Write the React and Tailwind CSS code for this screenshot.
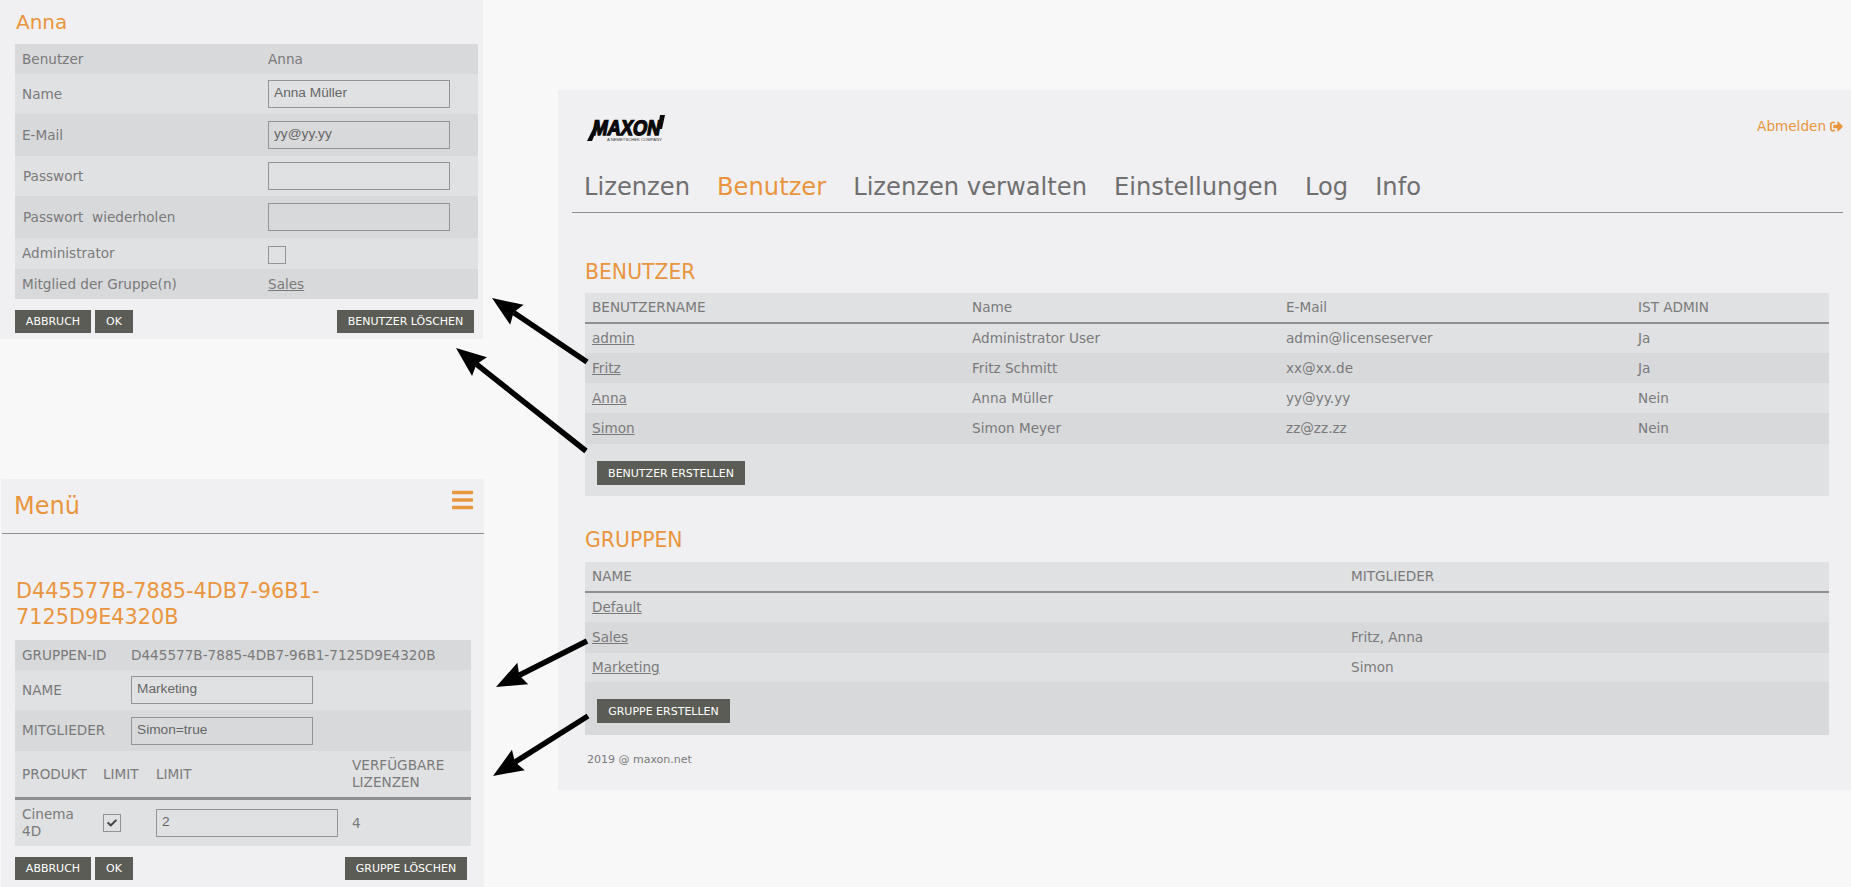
import React from "react";
import { FaBars, FaSignOutAlt, FaCheck } from "react-icons/fa";

const DARK = "bg-[#d8d9db]";
const LIGHT = "bg-[#e0e1e3]";
const inputCls =
  "h-[28px] w-[182px] border border-[#949494] bg-transparent px-[5px] pb-[3px] text-[13.7px] text-[#666] [font-family:'Liberation_Sans',Arial,sans-serif] outline-none";

function Btn({ children, className = "" }) {
  return (
    <span
      className={`inline-flex h-[23px] items-center justify-center bg-[#5a5c55] text-[11px] text-white ${className}`}
    >
      {children}
    </span>
  );
}

function Inp({ value = "", className = "" }) {
  return <input readOnly value={value} className={`${inputCls} ${className}`} />;
}

function FormRow({ label, h, bg, cols, labelCls = "pl-[7px]", children }) {
  return (
    <div className={`grid items-center ${cols} ${h} ${bg}`}>
      <div className={labelCls}>{label}</div>
      <div>{children}</div>
    </div>
  );
}

function UserPanel() {
  const cols = "grid-cols-[253px_1fr]";
  return (
    <section className="h-[339px] w-[483px] bg-[#f0f0f2] pl-[15px] pr-[5px]">
      <h2 className="h-[44px] pl-px pt-[8px] text-[20px] leading-[28px] text-[#e9953e]">Anna</h2>
      <FormRow label="Benutzer" h="h-[30px]" bg={DARK} cols={cols}>Anna</FormRow>
      <FormRow label="Name" h="h-[40px]" bg={LIGHT} cols={cols}><Inp value="Anna Müller" /></FormRow>
      <FormRow label="E-Mail" h="h-[42px]" bg={DARK} cols={cols}><Inp value="yy@yy.yy" /></FormRow>
      <FormRow label="Passwort" h="h-[40px]" bg={LIGHT} cols={cols} labelCls="pl-[8px]"><Inp /></FormRow>
      <FormRow label={"Passwort\u00a0 wiederholen"} h="h-[42px]" bg={DARK} cols={cols} labelCls="pl-[8px]"><Inp /></FormRow>
      <FormRow label="Administrator" h="h-[31px]" bg={LIGHT} cols={cols}>
        <span className="mt-[3px] block h-[18px] w-[18px] border border-[#949494]" />
      </FormRow>
      <FormRow label="Mitglied der Gruppe(n)" h="h-[30px]" bg={DARK} cols={cols}>
        <a className="underline">Sales</a>
      </FormRow>
      <div className="mt-[11px] flex gap-[4px] pr-[4px]">
        <Btn className="w-[76px]">ABBRUCH</Btn>
        <Btn className="w-[38px]">OK</Btn>
        <Btn className="ml-auto w-[137px]">BENUTZER LÖSCHEN</Btn>
      </div>
    </section>
  );
}

function GroupPanel() {
  const cols = "grid-cols-[116px_1fr]";
  const prod = "grid grid-cols-[81px_53px_196px_1fr] items-center pl-[7px]";
  return (
    <section className="ml-px h-[408px] w-[483px] bg-[#f0f0f2] pl-[14px] pr-[13px]">
      <div className="-mx-[13px] flex h-[55px] justify-between border-b border-[#8f8f8f] pl-[13px]">
        <h2 className="-ml-px pt-[12px] text-[24px] leading-[30px] text-[#e9953e]">Menü</h2>
        <FaBars className="mr-[11px] mt-[9px] h-[24px] w-[21px] text-[#e9953e]" />
      </div>
      <h2 className="h-[106px] pl-px pt-[45px] text-[20.8px] leading-[25.5px] text-[#e9953e]">
        D445577B-7885-4DB7-96B1-
        <br />
        7125D9E4320B
      </h2>
      <FormRow label="GRUPPEN-ID" h="h-[30px]" bg={DARK} cols={cols}>D445577B-7885-4DB7-96B1-7125D9E4320B</FormRow>
      <FormRow label="NAME" h="h-[40px]" bg={LIGHT} cols={cols}><Inp value="Marketing" /></FormRow>
      <FormRow label="MITGLIEDER" h="h-[41px]" bg={DARK} cols={cols}><Inp value="Simon=true" /></FormRow>
      <div className={`${prod} box-content h-[46px] border-b-[3px] border-[#8f8f8f] ${LIGHT}`}>
        <div>PRODUKT</div>
        <div>LIMIT</div>
        <div>LIMIT</div>
        <div className="leading-[17px]">VERFÜGBARE<br />LIZENZEN</div>
      </div>
      <div className={`${prod} h-[46px] ${LIGHT}`}>
        <div className="leading-[17px]">Cinema<br />4D</div>
        <div>
          <span className="flex h-[18px] w-[18px] items-center justify-center border border-[#949494]">
            <FaCheck className="h-[10px] w-[10px] text-[#444]" />
          </span>
        </div>
        <div><Inp value="2" /></div>
        <div>4</div>
      </div>
      <div className="mt-[11px] flex gap-[4px] pr-[4px]">
        <Btn className="w-[76px]">ABBRUCH</Btn>
        <Btn className="w-[38px]">OK</Btn>
        <Btn className="ml-auto w-[122px]">GRUPPE LÖSCHEN</Btn>
      </div>
    </section>
  );
}

function Logo() {
  return (
    <svg width="78" height="27" viewBox="0 0 78 27" className="block overflow-visible">
      <polygon points="0,26 5,26 11,12 7,12" fill="#0a0a0a" />
      <polygon points="73,0 78,0 75,14 71,14" fill="#0a0a0a" />
      <g transform="skewX(-10)">
        <text
          x="8"
          y="20"
          textLength="68"
          lengthAdjust="spacingAndGlyphs"
          fontFamily="'Liberation Sans', Arial, sans-serif"
          fontWeight="700"
          fontSize="21"
          fill="#0a0a0a"
          stroke="#0a0a0a"
          strokeWidth="1.4"
        >
          MAXON
        </text>
      </g>
      <text
        x="20"
        y="25.5"
        textLength="55"
        lengthAdjust="spacingAndGlyphs"
        fontFamily="'Liberation Sans', Arial, sans-serif"
        fontSize="4"
        fill="#333"
      >
        A NEMETSCHEK COMPANY
      </text>
    </svg>
  );
}

const NAV = ["Lizenzen", "Benutzer", "Lizenzen verwalten", "Einstellungen", "Log", "Info"];
const USERS = [
  ["admin", "Administrator User", "admin@licenseserver", "Ja", "h-[29px]", LIGHT],
  ["Fritz", "Fritz Schmitt", "xx@xx.de", "Ja", "h-[30px]", DARK],
  ["Anna", "Anna Müller", "yy@yy.yy", "Nein", "h-[30px]", LIGHT],
  ["Simon", "Simon Meyer", "zz@zz.zz", "Nein", "h-[31px]", DARK],
];
const GROUPS = [
  ["Default", "", "h-[29px]", LIGHT],
  ["Sales", "Fritz, Anna", "h-[31px]", DARK],
  ["Marketing", "Simon", "h-[29px]", LIGHT],
];

function MainPanel() {
  const uCols = "grid grid-cols-[380px_314px_352px_1fr] items-center pl-[7px]";
  const gCols = "grid grid-cols-[759px_1fr] items-center pl-[7px]";
  return (
    <main className="h-[700px] bg-[#f0f0f2] pl-[14px] pr-[8px]">
      <div className="flex h-[83px] justify-between pl-[15px] pt-[25px]">
        <Logo />
        <a className="flex h-[22px] items-center gap-[4px] text-[#e9953e]">
          Abmelden <FaSignOutAlt className="h-[13px] w-[13px]" />
        </a>
      </div>
      <nav className="box-content flex h-[39px] gap-[27px] border-b border-[#8f8f8f] pl-[12px] text-[24.2px] leading-[28px] text-[#6f6f6f]">
        {NAV.map((n) => (
          <span key={n} className={n === "Benutzer" ? "text-[#e9953e]" : ""}>{n}</span>
        ))}
      </nav>
      <div className="pl-[13px] pr-[14px]">
        <h2 className="h-[80px] pt-[46px] text-[20.4px] leading-[26px] text-[#e9953e]">BENUTZER</h2>
        <div className={`${uCols} box-content h-[29px] border-b-2 border-[#8f8f8f] ${LIGHT}`}>
          <div>BENUTZERNAME</div><div>Name</div><div>E-Mail</div><div>IST ADMIN</div>
        </div>
        {USERS.map(([u, n, m, a, h, bg]) => (
          <div key={u} className={`${uCols} ${h} ${bg}`}>
            <a className="underline">{u}</a><div>{n}</div><div>{m}</div><div>{a}</div>
          </div>
        ))}
        <div className={`h-[52px] pl-[12px] pt-[17px] ${LIGHT}`}>
          <Btn className="h-[24px] w-[148px]">BENUTZER ERSTELLEN</Btn>
        </div>
        <h2 className="h-[66px] pt-[31px] text-[20.4px] leading-[26px] text-[#e9953e]">GRUPPEN</h2>
        <div className={`${gCols} box-content h-[29px] border-b-2 border-[#8f8f8f] ${LIGHT}`}>
          <div>NAME</div><div>MITGLIEDER</div>
        </div>
        {GROUPS.map(([g, m, h, bg]) => (
          <div key={g} className={`${gCols} ${h} ${bg}`}>
            <a className="underline">{g}</a><div>{m}</div>
          </div>
        ))}
        <div className={`h-[53px] pl-[12px] pt-[17px] ${DARK}`}>
          <Btn className="h-[24px] w-[133px]">GRUPPE ERSTELLEN</Btn>
        </div>
        <p className="pl-[2px] pt-[17px] text-[11px] leading-[16px]">2019 @ maxon.net</p>
      </div>
    </main>
  );
}

function Arrows() {
  const lines = [
    [587, 362, 492, 298],
    [586, 451, 456, 348],
    [587, 641, 496, 687],
    [588, 716, 493, 776],
  ];
  return (
    <svg className="pointer-events-none absolute left-0 top-0" width="1851" height="887">
      {lines.map(([x1, y1, x2, y2], i) => {
        const len = Math.hypot(x2 - x1, y2 - y1);
        const ux = (x2 - x1) / len, uy = (y2 - y1) / len;
        const bx = x2 - ux * 30, by = y2 - uy * 30;
        const nx = x2 - ux * 26, ny = y2 - uy * 26;
        const px = -uy * 12, py = ux * 12;
        return (
          <g key={i}>
            <line x1={x1} y1={y1} x2={nx} y2={ny} stroke="#000" strokeWidth="5.5" />
            <polygon
              points={`${x2},${y2} ${bx + px},${by + py} ${nx},${ny} ${bx - px},${by - py}`}
              fill="#000"
            />
          </g>
        );
      })}
    </svg>
  );
}

export default function App() {
  return (
    <div className="relative flex h-[887px] w-[1851px] overflow-hidden bg-[#f8f8f8] text-[13.6px] leading-[17px] text-[#7a7a7a] [font-family:'DejaVu_Sans',Verdana,sans-serif]">
      <div className="flex w-[558px] shrink-0 flex-col gap-[140px]">
        <UserPanel />
        <GroupPanel />
      </div>
      <div className="mt-[90px] flex-1">
        <MainPanel />
      </div>
      <Arrows />
    </div>
  );
}
